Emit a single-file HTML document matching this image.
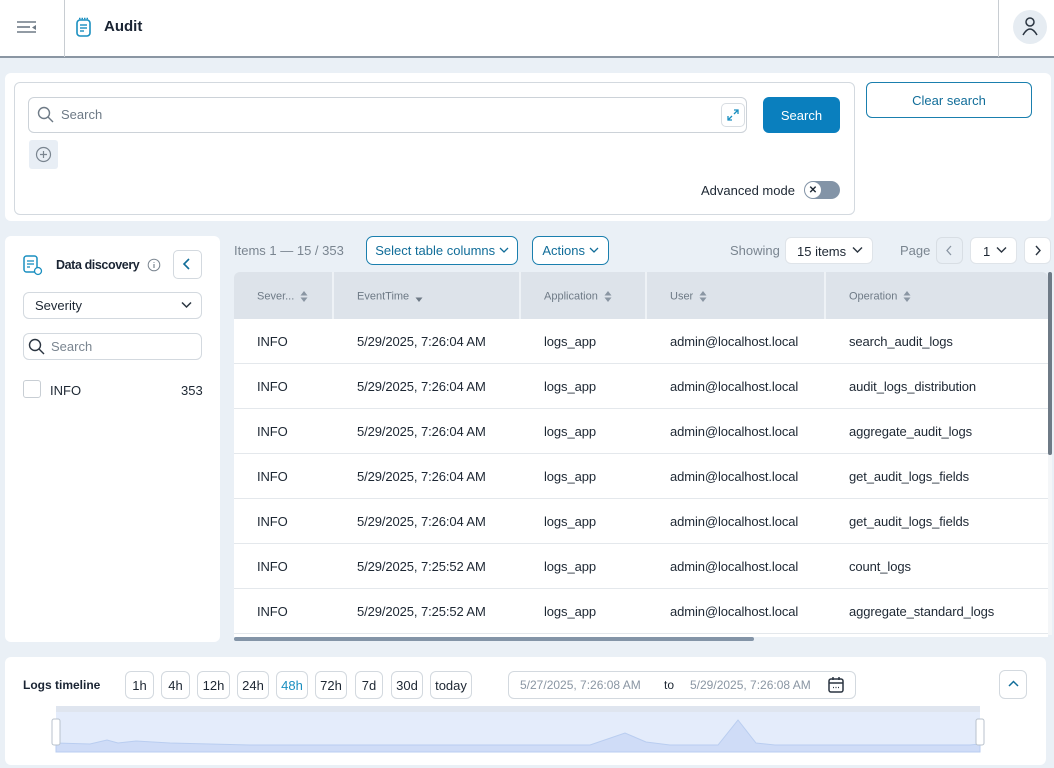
<!DOCTYPE html>
<html><head><meta charset="utf-8"><style>
*{box-sizing:border-box;margin:0;padding:0}
body{width:1054px;height:768px;overflow:hidden;background:#eaf0f6;font-family:"Liberation Sans",Arial,sans-serif;color:#1d2733;position:relative;font-size:13px}
.a{position:absolute}
.btn{position:absolute;border:1px solid #1a7fae;border-radius:6px;background:#fff;color:#116d99;display:flex;align-items:center;justify-content:center;font-size:13px}
.chip{position:absolute;top:671px;height:28px;border:1px solid #d3d9df;border-radius:6px;background:#fff;font-size:13px;display:flex;align-items:center;justify-content:center}
.row{position:absolute;left:234px;width:814px;height:45px;background:#fff;border-bottom:1px solid #e4e8ec}
.row span{position:absolute;top:15px;font-size:13px;color:#1d2733;letter-spacing:-0.1px}
.hd{position:absolute;top:290px;font-size:11px;color:#6e7a86}
.sort{display:inline-block;margin-left:6px;vertical-align:middle}
</style></head><body>
<!-- header -->
<div class="a" style="left:0;top:0;width:1054px;height:58px;background:#fff;border-bottom:2px solid #8a96a3"></div>
<div class="a" style="left:64px;top:0;width:1px;height:57px;background:#c8cdd2"></div>
<div class="a" style="left:998px;top:0;width:1px;height:57px;background:#c8cdd2"></div>
<svg class="a" style="left:16px;top:20px" width="22" height="16"><g stroke="#6e7a86" stroke-width="1.6"><line x1="1" y1="2" x2="20" y2="2"/><line x1="1" y1="7" x2="14" y2="7"/><line x1="1" y1="12" x2="20" y2="12"/></g><path d="M20 5 L16 7.5 L20 10Z" fill="#6e7a86"/></svg>
<svg class="a" style="left:75px;top:17px" width="18" height="22"><rect x="2" y="3" width="13" height="16" rx="3" fill="none" stroke="#1a8fc0" stroke-width="1.6"/><g stroke="#1a8fc0" stroke-width="1.4"><line x1="5" y1="8" x2="12" y2="8"/><line x1="5" y1="11" x2="12" y2="11"/><line x1="5" y1="14" x2="9" y2="14"/><line x1="4" y1="1.5" x2="13" y2="1.5" stroke-dasharray="1.5 1"/></g></svg>
<div class="a" style="left:104px;top:18px;font-size:15px;font-weight:bold;color:#1a2433">Audit</div>
<div class="a" style="left:1013px;top:10px;width:34px;height:34px;border-radius:50%;background:#e6ecf2"></div>
<svg class="a" style="left:1020px;top:16px" width="20" height="22"><circle cx="10" cy="6" r="4" fill="none" stroke="#2a3440" stroke-width="1.5"/><path d="M3 19 Q10 7 17 19" fill="none" stroke="#2a3440" stroke-width="1.5"/></svg>

<!-- search panel -->
<div class="a" style="left:5px;top:73px;width:1046px;height:148px;background:#fff;border-radius:6px"></div>
<div class="a" style="left:14px;top:82px;width:841px;height:133px;border:1px solid #d3d9df;border-radius:6px"></div>
<div class="a" style="left:28px;top:97px;width:719px;height:36px;border:1px solid #ccd2d8;border-radius:6px"></div>
<svg class="a" style="left:37px;top:106px" width="18" height="18"><circle cx="7" cy="7" r="5.5" fill="none" stroke="#6e7a86" stroke-width="1.4"/><line x1="11" y1="11" x2="16" y2="16" stroke="#6e7a86" stroke-width="1.4"/></svg>
<div class="a" style="left:61px;top:107px;color:#6e7a86;font-size:13px">Search</div>
<div class="a" style="left:721px;top:103px;width:24px;height:24px;border:1px solid #d8dde2;border-radius:5px"></div>
<svg class="a" style="left:726px;top:108px" width="14" height="14"><g stroke="#1a8fc0" stroke-width="1.3" fill="none"><path d="M8 2h4v4M12 2L8 6M6 12H2V8M2 12l4-4"/></g></svg>
<div class="a" style="left:29px;top:140px;width:29px;height:29px;background:#e8eef5;border-radius:3px"></div>
<svg class="a" style="left:35px;top:146px" width="17" height="17"><circle cx="8.5" cy="8.5" r="7" fill="none" stroke="#7a8590" stroke-width="1.2"/><path d="M8.5 5v7M5 8.5h7" stroke="#7a8590" stroke-width="1.2"/></svg>
<div class="a" style="left:763px;top:97px;width:77px;height:36px;background:#0a7fbe;border-radius:6px;color:#fff;font-size:13px;display:flex;align-items:center;justify-content:center">Search</div>
<div class="a" style="left:701px;top:183px;font-size:13px;color:#1d2733">Advanced mode</div>
<div class="a" style="left:804px;top:181px;width:36px;height:18px;border-radius:9px;background:#8394a7"></div>
<div class="a" style="left:805px;top:182px;width:16px;height:16px;border-radius:50%;background:#fff;font-size:10px;font-weight:bold;display:flex;align-items:center;justify-content:center">✕</div>
<div class="btn" style="left:866px;top:82px;width:166px;height:36px">Clear search</div>

<!-- left panel -->
<div class="a" style="left:5px;top:236px;width:215px;height:406px;background:#fff;border-radius:6px"></div>
<svg class="a" style="left:22px;top:254px" width="22" height="22"><rect x="2" y="2" width="13" height="16" rx="2.5" fill="none" stroke="#1a8fc0" stroke-width="1.5"/><g stroke="#1a8fc0" stroke-width="1.3"><line x1="5" y1="7" x2="12" y2="7"/><line x1="5" y1="10" x2="12" y2="10"/><line x1="5" y1="13" x2="8" y2="13"/></g><circle cx="16" cy="17" r="3.5" fill="#fff" stroke="#1a8fc0" stroke-width="1.3"/></svg>
<div class="a" style="left:56px;top:258px;font-size:12.5px;font-weight:bold;color:#1a2433;letter-spacing:-0.4px">Data discovery</div>
<svg class="a" style="left:147px;top:258px" width="14" height="14"><circle cx="7" cy="7" r="5.8" fill="none" stroke="#7a8590" stroke-width="1"/><path d="M7 6v4M7 4v.8" stroke="#7a8590" stroke-width="1.2"/></svg>
<div class="a" style="left:173px;top:250px;width:29px;height:29px;border:1px solid #d3d9df;border-radius:5px"></div>
<svg class="a" style="left:181px;top:258px" width="12" height="12"><path d="M8 1L3 6l5 5" fill="none" stroke="#116d99" stroke-width="1.6"/></svg>
<div class="a" style="left:23px;top:292px;width:179px;height:27px;border:1px solid #d3d9df;border-radius:6px"></div>
<div class="a" style="left:35px;top:298px;font-size:13px">Severity</div>
<svg class="a" style="left:181px;top:301px" width="11" height="8"><path d="M1 1.5l4.5 4.5 4.5-4.5" fill="none" stroke="#2a3440" stroke-width="1.5"/></svg>
<div class="a" style="left:23px;top:333px;width:179px;height:27px;border:1px solid #d3d9df;border-radius:6px"></div>
<svg class="a" style="left:28px;top:338px" width="17" height="17"><circle cx="7" cy="7" r="5.5" fill="none" stroke="#2a3440" stroke-width="1.4"/><line x1="11" y1="11" x2="16" y2="16" stroke="#2a3440" stroke-width="1.4"/></svg>
<div class="a" style="left:51px;top:339px;color:#7a8590;font-size:13px">Search</div>
<div class="a" style="left:23px;top:380px;width:18px;height:18px;border:1px solid #c8ced4;border-radius:3px"></div>
<div class="a" style="left:50px;top:383px;font-size:13px">INFO</div>
<div class="a" style="left:181px;top:383px;font-size:13px">353</div>

<!-- table toolbar -->
<div class="a" style="left:234px;top:243px;color:#7a8590;font-size:13px">Items 1 — 15 / 353</div>
<div class="btn" style="left:366px;top:236px;width:152px;height:29px;border-radius:7px">Select table columns&nbsp;<svg width="10" height="7"><path d="M1 1l4 4 4-4" fill="none" stroke="#116d99" stroke-width="1.3"/></svg></div>
<div class="btn" style="left:532px;top:236px;width:77px;height:29px;border-radius:7px">Actions&nbsp;<svg width="10" height="7"><path d="M1 1l4 4 4-4" fill="none" stroke="#116d99" stroke-width="1.3"/></svg></div>
<div class="a" style="left:730px;top:243px;color:#7a8590;font-size:13px">Showing</div>
<div class="a" style="left:785px;top:237px;width:88px;height:27px;background:#fff;border:1px solid #dfe4e9;border-radius:6px;font-size:13px;padding:6px 0 0 11px">15 items</div>
<svg class="a" style="left:852px;top:246px" width="11" height="8"><path d="M1 1.5l4.5 4.5 4.5-4.5" fill="none" stroke="#2a3440" stroke-width="1.4"/></svg>
<div class="a" style="left:900px;top:243px;color:#7a8590;font-size:13px">Page</div>
<div class="a" style="left:936px;top:237px;width:27px;height:27px;border:1px solid #d8dee4;border-radius:6px;background:#e9eff5"></div>
<svg class="a" style="left:945px;top:245px" width="8" height="11"><path d="M6 1L2 5.5 6 10" fill="none" stroke="#8a96a3" stroke-width="1.3"/></svg>
<div class="a" style="left:970px;top:237px;width:47px;height:27px;background:#fff;border:1px solid #dfe4e9;border-radius:6px;font-size:13px;padding:6px 0 0 12px">1</div>
<svg class="a" style="left:996px;top:246px" width="11" height="8"><path d="M1 1.5l4.5 4.5 4.5-4.5" fill="none" stroke="#2a3440" stroke-width="1.4"/></svg>
<div class="a" style="left:1024px;top:237px;width:27px;height:27px;background:#fff;border:1px solid #dfe4e9;border-radius:6px"></div>
<svg class="a" style="left:1034px;top:245px" width="8" height="11"><path d="M2 1l4 4.5L2 10" fill="none" stroke="#2a3440" stroke-width="1.4"/></svg>

<!-- table -->
<div class="a" style="left:234px;top:272px;width:814px;height:47px;background:#dde3ea;border-radius:6px 6px 0 0"></div>
<div class="a" style="left:332px;top:272px;width:2px;height:47px;background:#eef2f6"></div>
<div class="a" style="left:519px;top:272px;width:2px;height:47px;background:#eef2f6"></div>
<div class="a" style="left:645px;top:272px;width:2px;height:47px;background:#eef2f6"></div>
<div class="a" style="left:824px;top:272px;width:2px;height:47px;background:#eef2f6"></div>
<div class="hd" style="left:257px">Sever...<svg class="sort" width="8" height="13"><path d="M4 1L7.5 5.5h-7zM4 12L7.5 7.5h-7z" fill="#8a96a3"/></svg></div>
<div class="hd" style="left:357px">EventTime<svg class="sort" width="8" height="13"><path d="M4 12L7.5 7.5h-7z" fill="#6e7a86"/></svg></div>
<div class="hd" style="left:544px">Application<svg class="sort" width="8" height="13"><path d="M4 1L7.5 5.5h-7zM4 12L7.5 7.5h-7z" fill="#8a96a3"/></svg></div>
<div class="hd" style="left:670px">User<svg class="sort" width="8" height="13"><path d="M4 1L7.5 5.5h-7zM4 12L7.5 7.5h-7z" fill="#8a96a3"/></svg></div>
<div class="hd" style="left:849px">Operation<svg class="sort" width="8" height="13"><path d="M4 1L7.5 5.5h-7zM4 12L7.5 7.5h-7z" fill="#8a96a3"/></svg></div>

<div class="row" style="top:319px"><span style="left:23px">INFO</span><span style="left:123px">5/29/2025, 7:26:04 AM</span><span style="left:310px">logs_app</span><span style="left:436px">admin@localhost.local</span><span style="left:615px">search_audit_logs</span></div>
<div class="row" style="top:364px"><span style="left:23px">INFO</span><span style="left:123px">5/29/2025, 7:26:04 AM</span><span style="left:310px">logs_app</span><span style="left:436px">admin@localhost.local</span><span style="left:615px">audit_logs_distribution</span></div>
<div class="row" style="top:409px"><span style="left:23px">INFO</span><span style="left:123px">5/29/2025, 7:26:04 AM</span><span style="left:310px">logs_app</span><span style="left:436px">admin@localhost.local</span><span style="left:615px">aggregate_audit_logs</span></div>
<div class="row" style="top:454px"><span style="left:23px">INFO</span><span style="left:123px">5/29/2025, 7:26:04 AM</span><span style="left:310px">logs_app</span><span style="left:436px">admin@localhost.local</span><span style="left:615px">get_audit_logs_fields</span></div>
<div class="row" style="top:499px"><span style="left:23px">INFO</span><span style="left:123px">5/29/2025, 7:26:04 AM</span><span style="left:310px">logs_app</span><span style="left:436px">admin@localhost.local</span><span style="left:615px">get_audit_logs_fields</span></div>
<div class="row" style="top:544px"><span style="left:23px">INFO</span><span style="left:123px">5/29/2025, 7:25:52 AM</span><span style="left:310px">logs_app</span><span style="left:436px">admin@localhost.local</span><span style="left:615px">count_logs</span></div>
<div class="row" style="top:589px"><span style="left:23px">INFO</span><span style="left:123px">5/29/2025, 7:25:52 AM</span><span style="left:310px">logs_app</span><span style="left:436px">admin@localhost.local</span><span style="left:615px">aggregate_standard_logs</span></div>
<div class="a" style="left:234px;top:634px;width:814px;height:3px;background:#fff"></div>
<div class="a" style="left:234px;top:637px;width:520px;height:4px;background:#8394a7;border-radius:2px"></div>
<div class="a" style="left:1048px;top:272px;width:4px;height:183px;background:#6e7a86;border-radius:2px"></div>
<div class="a" style="left:1048px;top:455px;width:4px;height:180px;background:#f4f6f8"></div>

<!-- timeline -->
<div class="a" style="left:5px;top:657px;width:1041px;height:108px;background:#fff;border-radius:6px"></div>
<div class="a" style="left:23px;top:678px;font-size:12px;font-weight:bold;color:#1a2433">Logs timeline</div>
<div class="chip" style="left:125px;width:29px">1h</div>
<div class="chip" style="left:161px;width:29px">4h</div>
<div class="chip" style="left:197px;width:33px">12h</div>
<div class="chip" style="left:237px;width:32px">24h</div>
<div class="chip" style="left:276px;width:32px;color:#1a8fc0">48h</div>
<div class="chip" style="left:315px;width:32px">72h</div>
<div class="chip" style="left:355px;width:28px">7d</div>
<div class="chip" style="left:391px;width:32px">30d</div>
<div class="chip" style="left:430px;width:42px">today</div>
<div class="a" style="left:508px;top:671px;width:348px;height:28px;border:1px solid #d3d9df;border-radius:6px"></div>
<div class="a" style="left:520px;top:678px;font-size:12px;color:#8a96a3">5/27/2025, 7:26:08 AM</div>
<div class="a" style="left:664px;top:678px;font-size:12px;color:#1d2733">to</div>
<div class="a" style="left:690px;top:678px;font-size:12px;color:#8a96a3">5/29/2025, 7:26:08 AM</div>
<svg class="a" style="left:827px;top:676px" width="18" height="18"><rect x="2" y="3" width="14" height="13" rx="2" fill="none" stroke="#2a3440" stroke-width="1.5"/><line x1="2" y1="7" x2="16" y2="7" stroke="#2a3440" stroke-width="1.5"/><line x1="6" y1="1" x2="6" y2="4" stroke="#2a3440" stroke-width="1.5"/><line x1="12" y1="1" x2="12" y2="4" stroke="#2a3440" stroke-width="1.5"/><path d="M6 11.5h1M8.5 11.5h1M11 11.5h1" stroke="#2a3440" stroke-width="1.3"/></svg>
<div class="a" style="left:999px;top:670px;width:28px;height:29px;border:1px solid #d3d9df;border-radius:6px"></div>
<svg class="a" style="left:1008px;top:680px" width="11" height="8"><path d="M1 6l4.5-4.5L10 6" fill="none" stroke="#116d99" stroke-width="1.5"/></svg>
<svg class="a" style="left:50px;top:705px" width="936" height="48">
<rect x="6" y="1" width="924" height="6" fill="#dfe5ef"/>
<rect x="6" y="7" width="924" height="40" fill="#e4ecfb"/>
<path d="M6 38 L40 39 L57 35 L68 38 L86 36 L120 38 L200 40 L540 40 L575 28 L596 37 L620 40 L668 40 L688 15 L706 38 L725 40 L920 40 L930 39 L930 47 L6 47Z" fill="#cfdcf7" stroke="#b9cdf0" stroke-width="1"/>
<rect x="2" y="14" width="8" height="26" rx="2" fill="#fff" stroke="#b8c2cc"/>
<rect x="926" y="14" width="8" height="26" rx="2" fill="#fff" stroke="#b8c2cc"/>
</svg>
</body></html>
